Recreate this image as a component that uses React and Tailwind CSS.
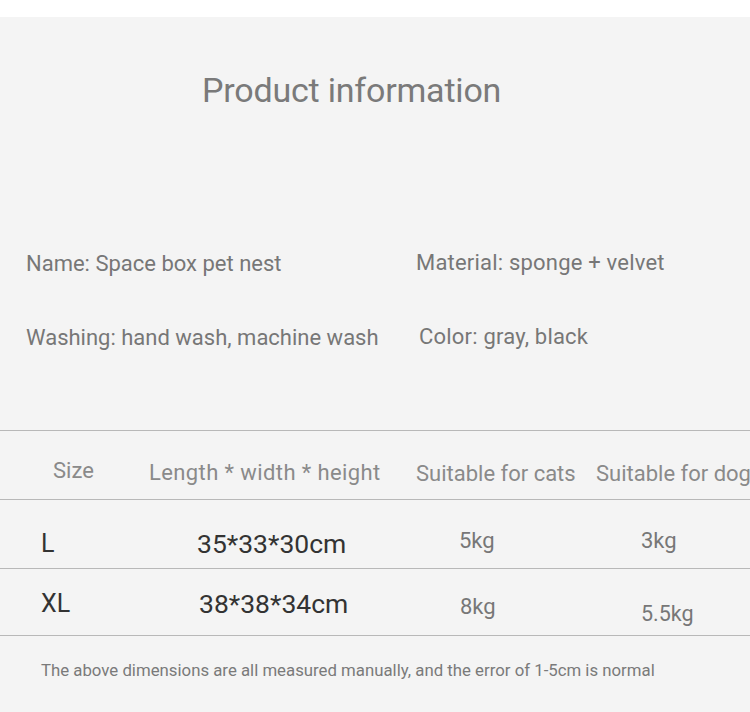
export default function App() {
  return (
    <div className="w-[750px] h-[712px] overflow-hidden bg-white font-['Roboto',sans-serif]">
      <div className="h-[17px] bg-white" />
      <div className="h-[695px] bg-[#f4f4f4] flex flex-col">
        <div className="pt-[54px] h-[226px] pl-[202px] text-[34px] leading-[38px] text-[#7a7a7a] whitespace-nowrap tracking-[-0.2px]">
          Product information
        </div>
        <div className="flex h-[40px] items-center text-[22px] text-[#777] whitespace-nowrap">
          <div className="w-[390px] pl-[26px]">Name: Space box pet nest</div>
          <div className="pl-[26px] -mt-[2px] tracking-[0.2px]">Material: sponge + velvet</div>
        </div>
        <div className="h-[34px]" />
        <div className="flex h-[40px] items-center text-[22px] text-[#777] whitespace-nowrap">
          <div className="w-[390px] pl-[26px]">Washing: hand wash, machine wash</div>
          <div className="pl-[29px] -mt-[2px] tracking-[0.2px]">Color: gray, black</div>
        </div>
        <div className="h-[73px]" />
        <div className="border-t border-[#b8b8b8] flex h-[69px] items-center text-[22px] text-[#8a8a8a] whitespace-nowrap">
          <div className="w-[130px] shrink-0 pl-[53px] mt-[10px]">Size</div>
          <div className="w-[267px] shrink-0 pl-[19px] mt-[14px] tracking-[0.4px]">Length * width * height</div>
          <div className="w-[180px] shrink-0 pl-[19px] mt-[16px]">Suitable for cats</div>
          <div className="shrink-0 pl-[19px] mt-[16px]">Suitable for dogs</div>
        </div>
        <div className="border-t border-[#b8b8b8] flex h-[69px] items-center whitespace-nowrap">
          <div className="w-[130px] pl-[41px] mt-[20px] text-[25px] text-[#333]">L</div>
          <div className="w-[270px] pl-[67px] mt-[20px] text-[26.5px] text-[#333]">35*33*30cm</div>
          <div className="w-[185px] pl-[59px] mt-[12px] text-[22px] text-[#777]">5kg</div>
          <div className="pl-[56px] mt-[12px] text-[22px] text-[#777]">3kg</div>
        </div>
        <div className="border-t border-[#b8b8b8] flex h-[67px] items-center whitespace-nowrap">
          <div className="w-[130px] pl-[41px] mt-[4px] text-[25px] text-[#333]">XL</div>
          <div className="w-[270px] pl-[69px] mt-[4px] text-[26.5px] text-[#333]">38*38*34cm</div>
          <div className="w-[185px] pl-[60px] mt-[8px] text-[22px] text-[#777]">8kg</div>
          <div className="pl-[56px] mt-[24px] text-[21.5px] text-[#777]">5.5kg</div>
        </div>
        <div className="border-t border-[#b8b8b8] pt-[24px] pl-[41px] text-[16.8px] leading-[20px] text-[#7a7a7a] whitespace-nowrap">
          The above dimensions are all measured manually, and the error of 1-5cm is normal
        </div>
      </div>
    </div>
  );
}
